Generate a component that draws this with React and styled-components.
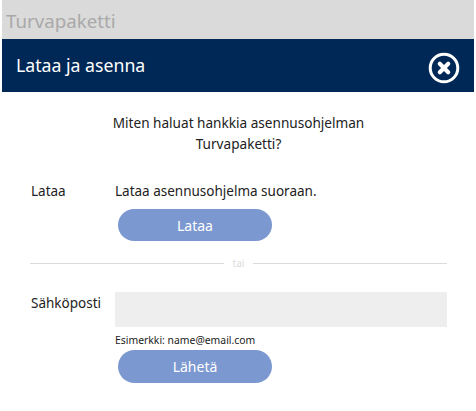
import React from 'react';
import styled, { createGlobalStyle } from 'styled-components';

const GlobalStyle = createGlobalStyle`
  html, body {
    margin: 0;
    padding: 0;
    background: #fff;
  }
  body {
    font-family: "Noto Sans", "Open Sans", sans-serif;
    color: #222;
  }
`;

const Page = styled.div`
  width: 472px;
  height: 411px;
  margin-left: 2px;
  overflow: hidden;
`;

const AppBar = styled.div`
  height: 39px;
  background: #dadada;
  color: #a9a9a9;
  font-size: 18.7px;
  line-height: 41px;
  padding-left: 4px;
`;

const Header = styled.div`
  height: 53px;
  background: #002856;
  color: #fff;
  display: flex;
  align-items: center;
  justify-content: space-between;
  padding: 0 14.5px 0 14px;
`;

const Title = styled.h1`
  margin: 0 0 2px;
  font-size: 17.7px;
  font-weight: 400;
`;

const CloseButton = styled.button`
  appearance: none;
  border: 0;
  background: none;
  padding: 0;
  width: 32px;
  height: 32px;
  margin-top: 4px;
  svg { display: block; }
`;

const Body = styled.div`
  padding: 20px 27px 0 28px;
`;

const Intro = styled.p`
  margin: 0 0 27px;
  text-align: center;
  font-size: 13.6px;
  line-height: 21px;
`;

const Row = styled.div`
  display: grid;
  grid-template-columns: 85px 1fr;
`;

const Label = styled.div`
  font-size: 13.5px;
  line-height: 20px;
  padding: ${props => props.$top || 0}px 0 0 1px;
`;

const Text = styled.div`
  font-size: 13.5px;
  line-height: 20px;
`;

const Action = styled.button`
  appearance: none;
  display: block;
  border: 0;
  width: 154px;
  height: ${props => props.$height}px;
  margin: ${props => props.$top}px 0 0 3px;
  border-radius: 17px;
  background: #7c98d0;
  color: #fff;
  font: 400 14px "Noto Sans", "Open Sans", sans-serif;
`;

const Divider = styled.div`
  display: flex;
  align-items: center;
  gap: 9px;
  margin: 15px 0 22px;
  color: #dcdcdc;
  font-size: 10px;
  line-height: 14px;
  &::before, &::after {
    content: '';
    flex: 1;
    height: 1px;
    background: #dcdcdc;
  }
`;

const EmailInput = styled.input`
  display: block;
  box-sizing: border-box;
  width: 100%;
  height: 35px;
  border: 0;
  background: #eee;
`;

const Hint = styled.div`
  font-size: 10.4px;
  line-height: 14px;
  margin-top: 6px;
`;

export default function App() {
  return (
    <Page>
      <GlobalStyle />
      <AppBar>Turvapaketti</AppBar>
      <Header>
        <Title>Lataa ja asenna</Title>
        <CloseButton aria-label="Sulje">
          <svg width="32" height="32" viewBox="0 0 32 32">
            <circle cx="16" cy="16" r="13.8" fill="none" stroke="#fff" strokeWidth="3" />
            <path d="M11.8 11.8l8.4 8.4M20.2 11.8l-8.4 8.4" stroke="#fff" strokeWidth="4.2" strokeLinecap="round" />
          </svg>
        </CloseButton>
      </Header>
      <Body>
        <Intro>
          Miten haluat hankkia asennusohjelman
          <br />
          Turvapaketti?
        </Intro>
        <Row>
          <Label>Lataa</Label>
          <div>
            <Text>Lataa asennusohjelma suoraan.</Text>
            <Action $top={8} $height={32}>Lataa</Action>
          </div>
        </Row>
        <Divider>tai</Divider>
        <Row>
          <Label $top={1}>Sähköposti</Label>
          <div>
            <EmailInput />
            <Hint>Esimerkki: name@email.com</Hint>
            <Action $top={3} $height={33}>Lähetä</Action>
          </div>
        </Row>
      </Body>
    </Page>
  );
}
